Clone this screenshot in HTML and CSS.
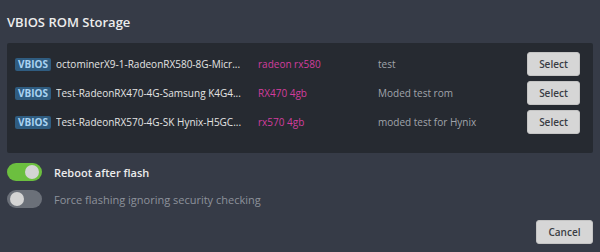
FILE: index.html
```html
<!DOCTYPE html>
<html>
<head>
<meta charset="utf-8">
<link rel="stylesheet" href="styles.css">
</head>
<body>
<div class="dialog">
  <h2 class="title">VBIOS ROM Storage</h2>
  <div class="panel">
    <div class="row">
      <div class="name"><span class="badge">VBIOS</span><span class="file">octominerX9-1-RadeonRX580-8G-Micr...</span></div>
      <div class="model">radeon rx580</div>
      <div class="desc">test</div>
      <button class="btn">Select</button>
    </div>
    <div class="row">
      <div class="name"><span class="badge">VBIOS</span><span class="file">Test-RadeonRX470-4G-Samsung K4G4...</span></div>
      <div class="model">RX470 4gb</div>
      <div class="desc">Moded test rom</div>
      <button class="btn">Select</button>
    </div>
    <div class="row">
      <div class="name"><span class="badge">VBIOS</span><span class="file">Test-RadeonRX570-4G-SK Hynix-H5GC...</span></div>
      <div class="model">rx570 4gb</div>
      <div class="desc">moded test for Hynix</div>
      <button class="btn">Select</button>
    </div>
  </div>
  <div class="options">
    <label class="opt"><span class="toggle on"><span class="knob"></span></span><span class="opt-label">Reboot after flash</span></label>
    <label class="opt"><span class="toggle"><span class="knob"></span></span><span class="opt-label dim">Force flashing ignoring security checking</span></label>
  </div>
  <div class="footer">
    <button class="btn cancel">Cancel</button>
  </div>
</div>
</body>
</html>
```
FILE: styles.css
```css
html, body {
  margin: 0;
  padding: 0;
  background: #363b47;
  width: 600px;
  height: 252px;
  overflow: hidden;
}
.dialog {
  padding: 0 7px;
  font-family: "Open Sans", "Liberation Sans", sans-serif;
  color: #e6e6e6;
}
.title {
  margin: 0;
  padding-top: 13px;
  height: 43px;
  box-sizing: border-box;
  font-size: 13px;
  font-weight: 600;
  line-height: 18px;
  color: #ececec;
}
.panel {
  background: #262a31;
  border-radius: 2px;
  padding: 9px 13px 20px 8px;
  height: 110px;
  box-sizing: border-box;
  display: flex;
  flex-direction: column;
  gap: 5px;
}
.row {
  display: grid;
  grid-template-columns: 243px 120px 1fr 53px;
  align-items: center;
  height: 24px;
}
.name {
  display: flex;
  align-items: center;
  white-space: nowrap;
  overflow: hidden;
  min-width: 0;
}
.badge {
  background: #2f5c80;
  color: #a9d3f2;
  font-size: 10px;
  font-weight: 700;
  line-height: 13px;
  padding: 0 3px;
  border-radius: 2px;
  margin-right: 5px;
}
.file {
  font-size: 10px;
  color: #e4e4e4;
  overflow: hidden;
  text-overflow: ellipsis;
}
.model {
  font-size: 10px;
  color: #d23d9e;
}
.desc {
  font-size: 10px;
  color: #a0a4ab;
}
.btn {
  font-family: "Open Sans", "Liberation Sans", sans-serif;
  font-size: 10px;
  font-weight: 600;
  color: #3a3d44;
  background: #d6d6d6;
  border: 1px solid #c4c4c4;
  border-radius: 3px;
  height: 24px;
  width: 53px;
  padding: 0;
}
.options {
  padding-top: 10px;
  display: flex;
  flex-direction: column;
  gap: 9px;
}
.opt {
  display: flex;
  align-items: center;
  gap: 12px;
  height: 18px;
}
.toggle {
  position: relative;
  width: 35px;
  height: 18px;
  border-radius: 9px;
  background: #6b7079;
  flex: none;
}
.toggle.on {
  background: #6cbf3f;
}
.knob {
  position: absolute;
  top: 2px;
  left: 3px;
  width: 14px;
  height: 14px;
  border-radius: 50%;
  background: #d4d4d4;
}
.toggle.on .knob {
  left: 18px;
}
.opt-label {
  font-size: 11px;
  font-weight: 600;
  color: #ececec;
}
.opt-label.dim {
  font-weight: 400;
  color: #8d929b;
}
.footer {
  display: flex;
  justify-content: flex-end;
  padding-top: 12px;
}
.cancel {
  width: 57px;
}
```
